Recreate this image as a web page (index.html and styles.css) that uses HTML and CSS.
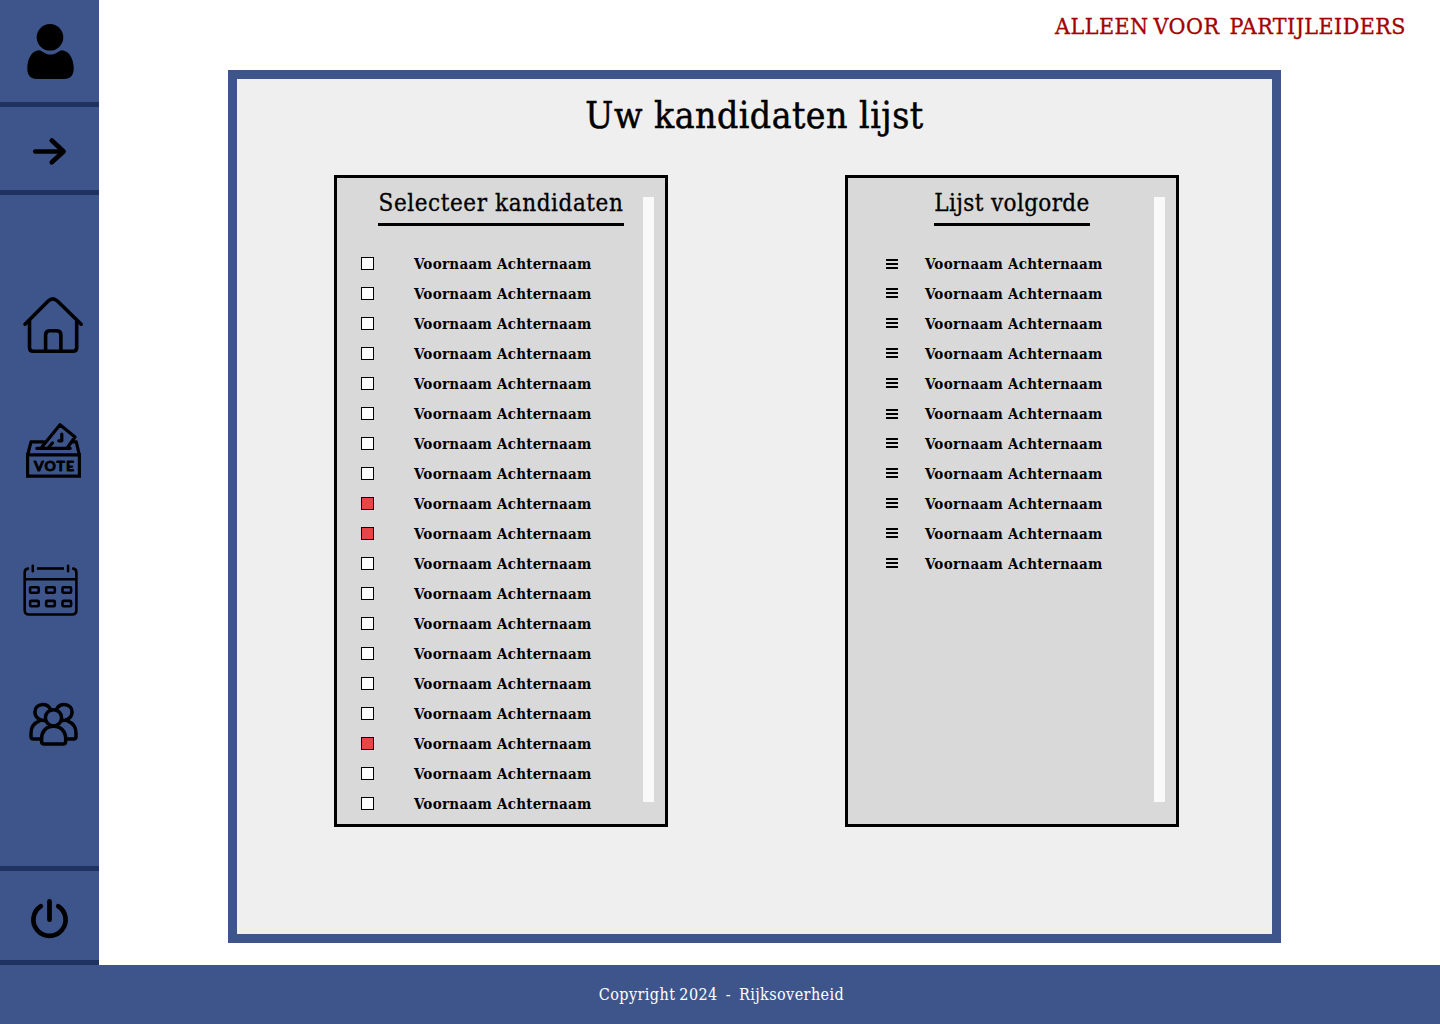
FILE: index.html
```html
<!DOCTYPE html>
<html lang="nl">
<head>
<meta charset="utf-8">
<title>Uw kandidaten lijst</title>
<link rel="stylesheet" href="styles.css">
</head>
<body>
<div class="page">
  <aside class="sidebar">
    <a class="side-user"><svg width="99" height="102" viewBox="0 0 99 102"><circle cx="50" cy="37.3" r="13.3"/><path d="M38.5 50.2C31 51 27.3 60 27.3 68C27.3 75.5 30.500 79 37 79H64C70.500 79 73.700 75.500 73.700 68C73.700 60 70 51 62 50.200C60 50.200 58.500 51.700 56.800 52.700C52.500 55.200 48.500 55.200 44.200 52.700C42.500 51.700 40.500 50 38.500 50.200Z"/></svg></a>
    <a class="side-toggle"><svg class="line" width="99" height="83" viewBox="0 107 99 83" stroke-width="4.7"><path d="M35.300 151.500H63M51.800 140.600L63.600 151.500L51.800 162.300"/></svg></a>
    <nav class="side-nav">
      <a><svg class="line" width="99" height="70" viewBox="0 290 99 70" stroke-width="3.600"><path d="M25 324.200L48.200 301Q52.800 296.600 57.400 301L81.200 324.200M29.500 320V347.500Q29.500 351.200 33.200 351.200H73Q76.700 351.200 76.700 347.500V320M45.600 351V335Q45.600 330.700 49.700 330.700H56.800Q60.900 330.700 60.900 335V351"/></svg></a>
      <a><svg class="line" width="99" height="70" viewBox="0 415 99 70" stroke-width="3.200"><path class="miter" d="M27.600 454.800V476.200H79.400V454.800Z"/><path d="M27.900 454L31 441.800H44M73 441.800H76.300L79.100 454M36.800 448.300H70.200M41.500 447.500L60 424.700L75 437L67.500 447.500M52.500 443L48 448M61.800 434.200V440.800H58.800"/><text class="vote" x="34" y="470.800" textLength="40" lengthAdjust="spacing">VOTE</text></svg></a>
      <a><svg class="line" width="99" height="60" viewBox="0 560 99 60" stroke-width="2.600"><path d="M28 568.600Q24.700 568.900 24.700 572.500V610Q24.700 614.500 29 614.500H72Q76.400 614.500 76.400 610V572.500Q76.400 568.900 73.200 568.600M24.700 579.300H76.400M32.800 565.800V571.300M68.100 565.800V571.300"/><path class="butt" d="M37 568.500H64"/><g><rect x="30.100" y="587.300" width="8.600" height="5.400" rx="1"/><rect x="46.200" y="587.300" width="8.600" height="5.400" rx="1"/><rect x="62.500" y="587.300" width="8.600" height="5.400" rx="1"/><rect x="30.100" y="600.900" width="8.600" height="5.400" rx="1"/><rect x="46.200" y="600.900" width="8.600" height="5.400" rx="1"/><rect x="62.500" y="600.900" width="8.600" height="5.400" rx="1"/></g></svg></a>
      <a><svg class="line" width="99" height="60" viewBox="0 695 99 60" stroke-width="3.500"><circle cx="53.500" cy="717.800" r="8.100"/><path d="M45.500 720.300C39.500 721.500 34.900 716.800 34.900 712C34.900 707.500 38.500 704.500 42.800 704.500C46.300 704.500 48.800 706 50.300 709M61.500 720.300C67.500 721.500 72.100 716.800 72.100 712C72.100 707.500 68.500 704.500 64.200 704.500C60.700 704.500 58.200 706 56.700 709M39.500 720.800C34 723 31 727.500 31 733V736.500Q31 739 33.500 739H41.300M67.500 720.800C73 723 76 727.500 76 733V736.500Q76 739 73.500 739H65.700M41.600 739C41.600 731.500 46 726.200 53.500 726.200C61 726.200 65.700 731.500 65.700 739V741.200Q65.700 744 63 744H44.300Q41.600 744 41.600 741.200Z"/></svg></a>
    </nav>
    <a class="side-power"><svg class="line" width="99" height="89" viewBox="0 871 99 89" stroke-width="4.700"><path d="M49.500 901.300V919.700M40.800 906.200A16.100 16.100 0 1 0 58.200 906.200"/></svg></a>
  </aside>
  <main class="content">
    <p class="notice">ALLEEN VOOR&nbsp; PARTIJLEIDERS</p>
    <section class="panel">
      <h1>Uw kandidaten lijst</h1>
      <div class="cards">
        <div class="card select">
          <div class="body"><h2>Selecteer kandidaten</h2>
          <ul>
            <li><i class="box"></i><span>Voornaam Achternaam</span></li>
            <li><i class="box"></i><span>Voornaam Achternaam</span></li>
            <li><i class="box"></i><span>Voornaam Achternaam</span></li>
            <li><i class="box"></i><span>Voornaam Achternaam</span></li>
            <li><i class="box"></i><span>Voornaam Achternaam</span></li>
            <li><i class="box"></i><span>Voornaam Achternaam</span></li>
            <li><i class="box"></i><span>Voornaam Achternaam</span></li>
            <li><i class="box"></i><span>Voornaam Achternaam</span></li>
            <li><i class="box on"></i><span>Voornaam Achternaam</span></li>
            <li><i class="box on"></i><span>Voornaam Achternaam</span></li>
            <li><i class="box"></i><span>Voornaam Achternaam</span></li>
            <li><i class="box"></i><span>Voornaam Achternaam</span></li>
            <li><i class="box"></i><span>Voornaam Achternaam</span></li>
            <li><i class="box"></i><span>Voornaam Achternaam</span></li>
            <li><i class="box"></i><span>Voornaam Achternaam</span></li>
            <li><i class="box"></i><span>Voornaam Achternaam</span></li>
            <li><i class="box on"></i><span>Voornaam Achternaam</span></li>
            <li><i class="box"></i><span>Voornaam Achternaam</span></li>
            <li><i class="box"></i><span>Voornaam Achternaam</span></li>
          </ul></div>
          <div class="scroll"></div>
        </div>
        <div class="card order">
          <div class="body"><h2>Lijst volgorde</h2>
          <ul>
            <li><i class="grip low"></i><span>Voornaam Achternaam</span></li>
            <li><i class="grip"></i><span>Voornaam Achternaam</span></li>
            <li><i class="grip"></i><span>Voornaam Achternaam</span></li>
            <li><i class="grip"></i><span>Voornaam Achternaam</span></li>
            <li><i class="grip"></i><span>Voornaam Achternaam</span></li>
            <li><i class="grip low"></i><span>Voornaam Achternaam</span></li>
            <li><i class="grip"></i><span>Voornaam Achternaam</span></li>
            <li><i class="grip"></i><span>Voornaam Achternaam</span></li>
            <li><i class="grip"></i><span>Voornaam Achternaam</span></li>
            <li><i class="grip"></i><span>Voornaam Achternaam</span></li>
            <li><i class="grip"></i><span>Voornaam Achternaam</span></li>
          </ul></div>
          <div class="scroll"></div>
        </div>
      </div>
    </section>
  </main>
  <footer class="footer"><span>Copyright 2024&nbsp; -&nbsp; Rijksoverheid</span></footer>
</div>
</body>
</html>
```
FILE: styles.css
```css
* { box-sizing: border-box; }
body { margin: 0; font-family: "DejaVu Serif Condensed", "DejaVu Serif", serif; font-stretch: condensed; color: #000; background: #fff; }
h1, h2, p, ul { margin: 0; padding: 0; font-weight: 400; white-space: nowrap; }
ul { list-style: none; }
svg { display: block; }
.page { display: grid; grid-template: 965px 59px / 99px 1fr; width: 1440px; height: 1024px; }
.sidebar { display: flex; flex-direction: column; background: #3e558c; }
.side-user, .side-toggle { border-bottom: 5px solid #20325f; }
.side-nav { flex: 1; display: flex; flex-direction: column; padding-top: 95px; }
.side-nav a:nth-child(2) { margin-top: 55px; }
.side-nav a:nth-child(n+3) { margin-top: 75px; }
.side-power { border: solid #20325f; border-width: 5px 0; }
.line { fill: none; stroke: #000; stroke-linecap: round; stroke-linejoin: round; }
.butt { stroke-linecap: butt; }
.miter { stroke-linejoin: miter; }
.vote { fill: #000; stroke: #000; stroke-width: .9px; font: 700 14px Lato, sans-serif; }
.content { padding-left: 129px; }
.notice { height: 70px; padding: 11px 34px 0 0; text-align: right; line-height: 30px; font-size: 23px; letter-spacing: .45px; word-spacing: -2px; color: #a30000; -webkit-text-stroke: .3px; }
.panel { width: 1053px; height: 873px; border: 9px solid #3e558c; background: #efefef; }
.panel h1 { height: 96px; padding-top: 13px; text-align: center; line-height: 48px; font-size: 37px; letter-spacing: .5px; -webkit-text-stroke: .5px; }
.cards { display: flex; gap: 177px; padding-left: 97px; }
.card { display: flex; justify-content: space-between; width: 334px; height: 652px; border: 3px solid #000; background: #d9d9d9; padding-right: 11px; }
.body { display: flex; flex-direction: column; padding-left: 24px; }
.card h2 { height: 48px; margin-left: 17px; border-bottom: 3px solid #000; padding-top: 10px; line-height: 30px; font-size: 24px; letter-spacing: .58px; width: 246px; text-align: center; -webkit-text-stroke: .3px; }
.card ul { padding-top: 23px; }
.card li { display: flex; align-items: center; height: 30px; font-size: 15px; font-weight: 700; letter-spacing: .27px; line-height: 30px; white-space: nowrap; }
.box { width: 13px; height: 13px; margin: 0 40px 2px 0; border: 1px solid #000; background: #fdfdfd; }
.box.on { background: #e94545; }
.order .body { padding-left: 38px; }
.order h2 { width: 156px; margin-left: 48px; letter-spacing: .35px; }
.grip { width: 12px; height: 10px; margin: 0 27px 3px 0; background: linear-gradient(#000 2px, transparent 2px 4px, #000 4px 6px, transparent 6px 8px, #000 8px); }
.grip.low { margin-bottom: 1px; }
.scroll { width: 11px; height: 605px; margin-top: 19px; background: #f9f9f9; }
.footer { grid-column: 1 / -1; display: flex; justify-content: center; background: #3e558c; color: #fff; font-size: 16px; letter-spacing: .42px; word-spacing: -1px; line-height: 59px; padding-left: 3px; }
```
